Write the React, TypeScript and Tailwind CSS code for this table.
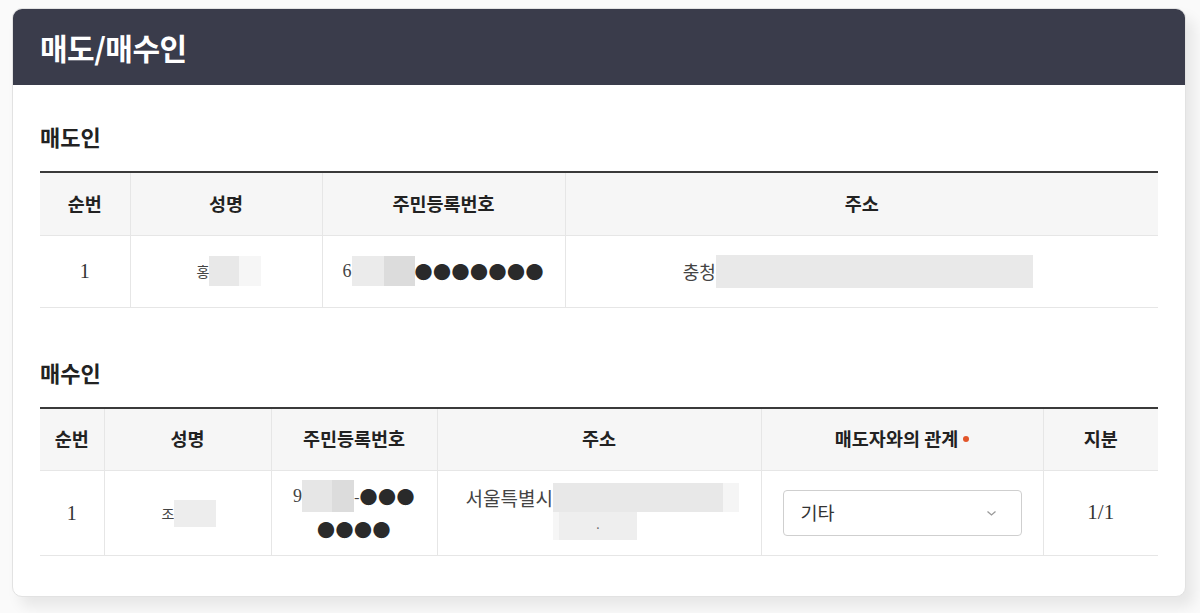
import React from "react";

const KR = "font-['Noto_Sans_CJK_KR','Noto_Sans',sans-serif]";
const SERIF = "font-['Liberation_Serif','Noto_Serif',serif]";

function Dots({ n }: { n: number }) {
  return (
    <span className="text-[18px] leading-none tracking-[0.5px] text-[#2a2a2a]">
      {"●".repeat(n)}
    </span>
  );
}

function Th({ children }: { children: React.ReactNode }) {
  return (
    <th className="border-l border-[#e6e6e6] first:border-l-0 bg-[#f6f6f6] text-[18.5px] font-bold text-[#222] h-[63px] text-center">
      {children}
    </th>
  );
}

export default function App() {
  return (
    <div className={`${KR} min-h-[613px] bg-[#fafafa] pt-2 pl-3 pr-[14px] pb-4`}>
      <div className="rounded-[10px] bg-white border border-[#e2e2e2] overflow-hidden shadow-[8px_10px_14px_rgba(0,0,0,0.08)]">
        <div className="bg-[#3a3c4b] h-[76px] flex items-center px-[27px]">
          <h1 className="text-white text-[30px] font-bold tracking-[-0.5px]">매도/매수인</h1>
        </div>
        <div className="px-[27px] pt-[38px] pb-[40px]">
          <h2 className="text-[22px] font-bold text-[#222] leading-[26px] mb-[22px]">매도인</h2>
          <table className="w-full table-fixed border-collapse border-t-2 border-[#3a3a3a]">
            <colgroup>
              <col className="w-[90px]" />
              <col className="w-[192px]" />
              <col className="w-[243px]" />
              <col />
            </colgroup>
            <thead>
              <tr>
                <Th>순번</Th>
                <Th>성명</Th>
                <Th>주민등록번호</Th>
                <Th>주소</Th>
              </tr>
            </thead>
            <tbody>
              <tr className="border-t border-b border-[#e6e6e6] h-[72px]">
                <td className={`${SERIF} text-center text-[20px] text-[#333]`}>1</td>
                <td className="border-l border-[#e6e6e6]">
                  <div className="flex items-center pl-[66px]">
                    <span className="text-[14px] text-[#444]">홍</span>
                    <span className="w-[30px] h-[30px] bg-[#e8e8e8]" />
                    <span className="w-[22px] h-[30px] bg-[#f6f6f6]" />
                  </div>
                </td>
                <td className="border-l border-[#e6e6e6]">
                  <div className="flex items-center pl-[20px]">
                    <span className={`${SERIF} text-[18px] text-[#444]`}>6</span>
                    <span className="w-[32px] h-[30px] bg-[#ebebeb]" />
                    <span className="w-[31px] h-[30px] bg-[#dcdcdc]" />
                    <Dots n={7} />
                  </div>
                </td>
                <td className="border-l border-[#e6e6e6]">
                  <div className="flex items-center justify-center pr-[8px]">
                    <span className="text-[18px] text-[#444]">충청</span>
                    <span className="w-[317px] h-[33px] bg-[#e9e9e9]" />
                  </div>
                </td>
              </tr>
            </tbody>
          </table>

          <h2 className="text-[22px] font-bold text-[#222] leading-[26px] mt-[51px] mb-[22px]">매수인</h2>
          <table className="w-full table-fixed border-collapse border-t-2 border-[#3a3a3a]">
            <colgroup>
              <col className="w-[64px]" />
              <col className="w-[167px]" />
              <col className="w-[166px]" />
              <col className="w-[324px]" />
              <col className="w-[282px]" />
              <col />
            </colgroup>
            <thead>
              <tr>
                <Th>순번</Th>
                <Th>성명</Th>
                <Th>주민등록번호</Th>
                <Th>주소</Th>
                <Th>
                  <span className="inline-flex items-center">
                    매도자와의 관계
                    <span className="ml-[5px] w-[6px] h-[6px] rounded-full bg-[#e2552a] inline-block" />
                  </span>
                </Th>
                <Th>지분</Th>
              </tr>
            </thead>
            <tbody>
              <tr className="border-t border-b border-[#e6e6e6] h-[85px]">
                <td className={`${SERIF} text-center text-[20px] text-[#333]`}>1</td>
                <td className="border-l border-[#e6e6e6]">
                  <div className="flex items-center pl-[57px]">
                    <span className="text-[14px] text-[#444]">조</span>
                    <span className="w-[42px] h-[27px] bg-[#ededed]" />
                  </div>
                </td>
                <td className="border-l border-[#e6e6e6] align-top pt-[9px]">
                  <div className="flex flex-col items-center">
                    <div className="flex items-center">
                      <span className={`${SERIF} text-[18px] text-[#444]`}>9</span>
                      <span className="w-[30px] h-[32px] bg-[#e6e6e6]" />
                      <span className="w-[22px] h-[32px] bg-[#dcdcdc]" />
                      <span className="text-[16px] text-[#444]">-</span>
                      <Dots n={3} />
                    </div>
                    <div className="mt-[6px]">
                      <Dots n={4} />
                    </div>
                  </div>
                </td>
                <td className="border-l border-[#e6e6e6] align-top pt-[12px] pl-[28px]">
                  <div className="flex items-start">
                    <span className="text-[19px] text-[#444] leading-[26px] mt-[2px]">서울특별시</span>
                    <div className="flex flex-col">
                      <div className="flex">
                        <span className="w-[170px] h-[29px] bg-[#e8e8e8]" />
                        <span className="w-[16px] h-[29px] bg-[#f5f5f5]" />
                      </div>
                      <div className="flex items-end">
                        <span className="w-[6px] h-[28px] bg-[#f6f6f6]" />
                        <span className="w-[78px] h-[28px] bg-[#eeeeee] text-center text-[12px] leading-[24px] text-[#666]">.</span>
                      </div>
                    </div>
                  </div>
                </td>
                <td className="border-l border-[#e6e6e6] px-[21px]">
                  <div className="h-[46px] rounded-[4px] border border-[#cfcfcf] flex items-center justify-between pl-[17px] pr-[24px]">
                    <span className="text-[18.5px] text-[#333]">기타</span>
                    <svg width="11" height="7" viewBox="0 0 11 7" fill="none">
                      <path d="M1.5 1.5 L5.5 5 L9.5 1.5" stroke="#9a9a9a" strokeWidth="1.3" />
                    </svg>
                  </div>
                </td>
                <td className={`${SERIF} border-l border-[#e6e6e6] text-center text-[21px] text-[#333]`}>1/1</td>
              </tr>
            </tbody>
          </table>
        </div>
      </div>
    </div>
  );
}
